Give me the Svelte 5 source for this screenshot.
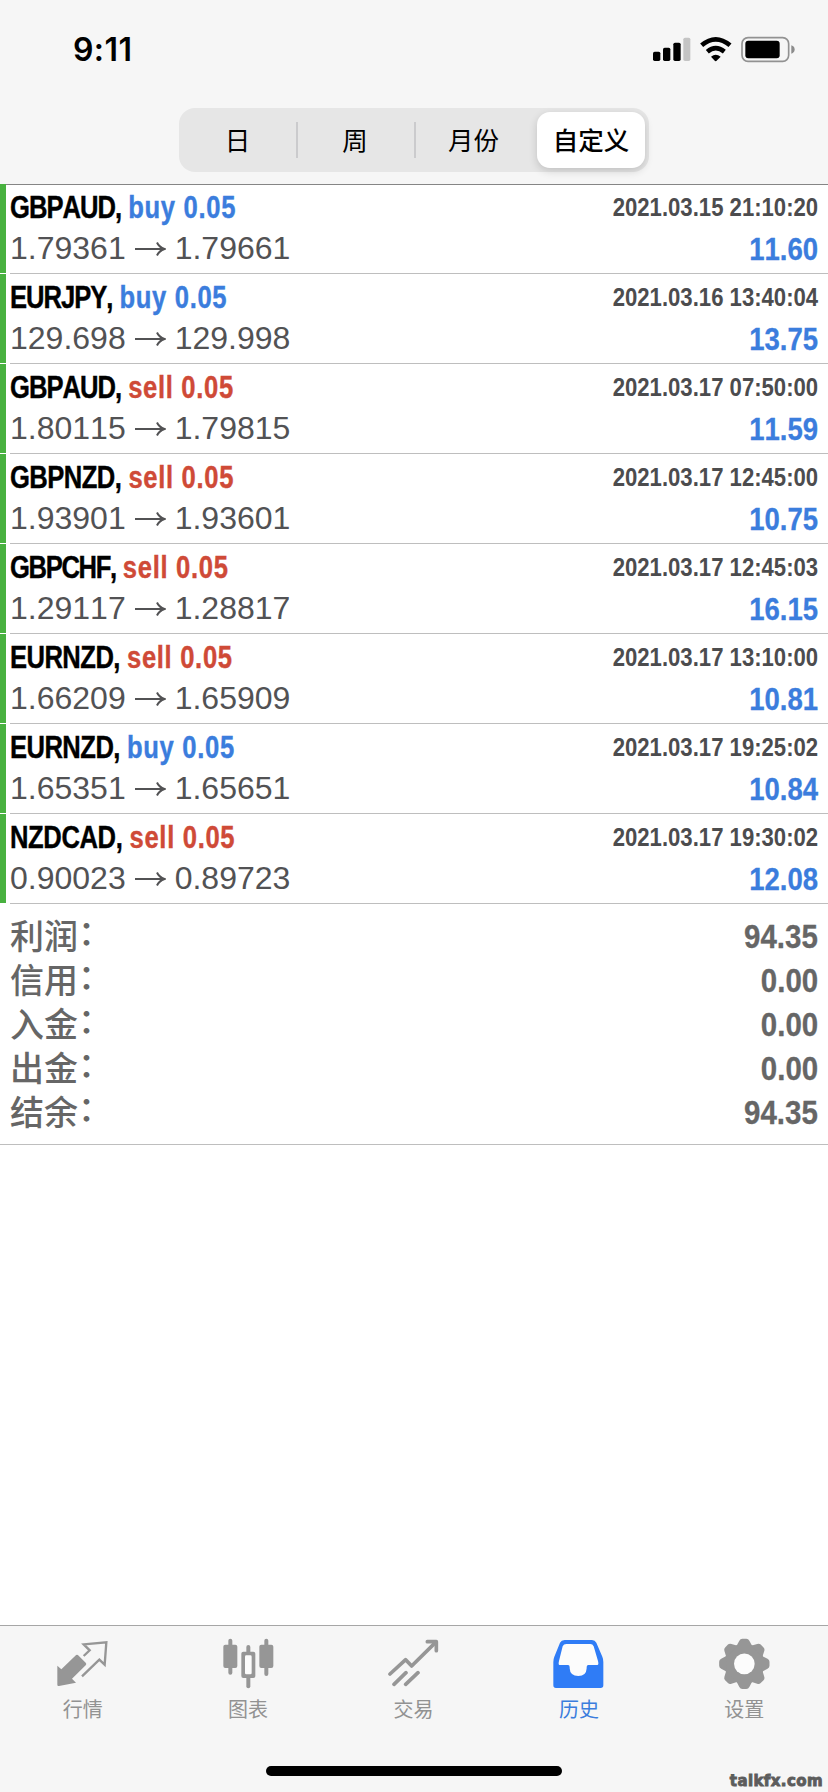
<script>
    const periods = ['日', '周', '月份', '自定义'];
    let period = '自定义';

    const deals = [
        { symbol: 'GBPAUD', side: 'buy', volume: '0.05', open: '1.79361', close: '1.79661', time: '2021.03.15 21:10:20', profit: '11.60' },
        { symbol: 'EURJPY', side: 'buy', volume: '0.05', open: '129.698', close: '129.998', time: '2021.03.16 13:40:04', profit: '13.75' },
        { symbol: 'GBPAUD', side: 'sell', volume: '0.05', open: '1.80115', close: '1.79815', time: '2021.03.17 07:50:00', profit: '11.59' },
        { symbol: 'GBPNZD', side: 'sell', volume: '0.05', open: '1.93901', close: '1.93601', time: '2021.03.17 12:45:00', profit: '10.75' },
        { symbol: 'GBPCHF', side: 'sell', volume: '0.05', open: '1.29117', close: '1.28817', time: '2021.03.17 12:45:03', profit: '16.15' },
        { symbol: 'EURNZD', side: 'sell', volume: '0.05', open: '1.66209', close: '1.65909', time: '2021.03.17 13:10:00', profit: '10.81' },
        { symbol: 'EURNZD', side: 'buy', volume: '0.05', open: '1.65351', close: '1.65651', time: '2021.03.17 19:25:02', profit: '10.84' },
        { symbol: 'NZDCAD', side: 'sell', volume: '0.05', open: '0.90023', close: '0.89723', time: '2021.03.17 19:30:02', profit: '12.08' }
    ];

    // letter spacing of each pair in the condensed title
    const tracking = {
        GBPAUD: -1.25,
        EURJPY: -1.3,
        GBPNZD: -0.7,
        GBPCHF: -1.7,
        EURNZD: -0.7,
        NZDCAD: -0.5
    };

    const summary = [
        { label: '利润', value: '94.35' },
        { label: '信用', value: '0.00' },
        { label: '入金', value: '0.00' },
        { label: '出金', value: '0.00' },
        { label: '结余', value: '94.35' }
    ];

    const tabs = [
        { id: 'quotes', label: '行情' },
        { id: 'charts', label: '图表' },
        { id: 'trade', label: '交易' },
        { id: 'history', label: '历史' },
        { id: 'settings', label: '设置' }
    ];
    let activeTab = 'history';

    const teeth = [0, 45, 90, 135, 180, 225, 270, 315];
</script>

<div class="screen">
    <header>
        <div class="status">
            <span class="clock">9:11</span>
            <svg class="indicators" viewBox="716 108 426 81">
                <rect x="716" y="155" width="22" height="28" rx="5" />
                <rect x="746" y="143" width="22" height="40" rx="5" />
                <rect x="777" y="128" width="22" height="55" rx="5" />
                <rect x="807" y="113" width="21" height="70" rx="5" fill="#c4c4c4" />
                <g fill="none" stroke="#000" stroke-width="14">
                    <path d="M862 136Q904 100 947 136" />
                    <path d="M879 155Q904 134 930 155" />
                </g>
                <path d="M890 170Q904 158 919 170L906 183Q904 184 902 183Z" />
                <rect x="983" y="113" width="140" height="71" rx="18" fill="none" stroke="#929292" stroke-width="5" />
                <rect x="993" y="122" width="103" height="53" rx="9" />
                <path d="M1131 136Q1141 139 1141 148.500Q1141 158 1131 161Z" fill="#8c8c8c" />
            </svg>
        </div>
        <div class="segments">
            {#each periods as name, i}
                <button class="segment" class:divided={i > 0 && i < 3} class:selected={period === name} on:click={() => (period = name)}>{name}</button>
            {/each}
        </div>
    </header>

    <main>
        {#each deals as deal}
            <div class="deal">
                <div class="bar"></div>
                <div class="deal-body">
                    <div class="line">
                        <span class="title"><span style="letter-spacing: {tracking[deal.symbol]}px">{deal.symbol},</span> <span class={deal.side}>{deal.side} {deal.volume}</span></span>
                        <span class="time">{deal.time}</span>
                    </div>
                    <div class="line">
                        <span class="prices">
                            {deal.open}
                            <svg class="arrow" viewBox="0 0 31 16"><path d="M0 8H29M22 1.500Q24 6 29.500 8Q24 10 22 14.500" /></svg>
                            {deal.close}
                        </span>
                        <span class="profit">{deal.profit}</span>
                    </div>
                </div>
            </div>
        {/each}

        <div class="summary">
            {#each summary as row}
                <div class="summary-row">
                    <span>{row.label}<span class="colon">：</span></span>
                    <span class="amount">{row.value}</span>
                </div>
            {/each}
        </div>
    </main>

    <nav>
        {#each tabs as tab}
            <button class="tab" class:active={activeTab === tab.id} on:click={() => (activeTab = tab.id)}>
                {#if tab.id === 'quotes'}
                    <svg viewBox="170 84 153 153">
                        <path d="M171 167L183 178L225 137Q230 132 235 137L256 158Q260 162 256 166L215 206L227 218L176 228Q171 229 171 224Z" />
                        <path class="outline" stroke-width="7" d="M245 199L297 149L313 164L318 97L250 103L268 121L250 138" />
                    </svg>
                {:else if tab.id === 'charts'}
                    <svg viewBox="668 84 153 153">
                        <rect x="684" y="86" width="12" height="108" rx="6" />
                        <rect x="669" y="104" width="42" height="70" rx="6" />
                        <rect x="792" y="86" width="12" height="112" rx="6" />
                        <rect x="777" y="104" width="42" height="70" rx="6" />
                        <rect x="738" y="105" width="12" height="130" rx="6" />
                        <rect x="723" y="125" width="42" height="79" rx="6" />
                        <rect class="hole" x="734" y="136" width="20" height="57" rx="4" />
                    </svg>
                {:else if tab.id === 'trade'}
                    <svg viewBox="263 84 153 153">
                        <path class="outline round" stroke-width="11" d="M269 192L316 149L334 168L405 98M281 223L317 188M316 223L353 188" />
                        <path class="outline round" stroke-width="11" d="M381 95H408V122" />
                    </svg>
                {:else if tab.id === 'history'}
                    <svg viewBox="38 84 153 153">
                        <path d="M73 90H155Q164 90 168 98L186 140Q189 147 189 156V226Q189 234 181 234H47Q39 234 39 226V156Q39 147 42 140L59 98Q63 90 73 90Z" />
                        <path class="hole" d="M78 102H150Q157 102 160 109L173 153Q176 165 171 165H144Q139 165 139 171V175Q138 198 114 198Q89 198 88 175V171Q88 165 83 165H58Q53 165 56 153L67 109Q70 102 78 102Z" />
                    </svg>
                {:else}
                    <svg viewBox="536 84 153 153">
                        <circle cx="612" cy="161.500" r="60" />
                        {#each teeth as angle}
                            <path d="M588 109L597 92Q600 86 606 86H618Q624 86 627 92L636 109Z" transform="rotate({angle} 612 161.500)" />
                        {/each}
                        <circle class="hole" cx="612" cy="161.500" r="31" />
                    </svg>
                {/if}
                <span>{tab.label}</span>
            </button>
        {/each}
    </nav>
    <footer><div class="home"></div></footer>
    <div class="watermark">talkfx.com</div>
</div>

<style>
    :global(body) {
        margin: 0;
    }

    .screen {
        position: relative;
        display: flex;
        flex-direction: column;
        width: 828px;
        height: 1792px;
        overflow: hidden;
        background: #fff;
        font-family: "Liberation Sans", "Noto Sans CJK SC", sans-serif;
        font-kerning: none;
    }

    button {
        margin: 0;
        padding: 0;
        border: 0;
        background: none;
        font-family: "Noto Sans CJK SC", sans-serif;
    }

    header {
        box-sizing: border-box;
        height: 185px;
        flex: none;
        background: #f6f6f6;
        border-bottom: 1px solid #858585;
    }

    .status {
        display: flex;
        justify-content: space-between;
        align-items: flex-start;
        box-sizing: border-box;
        height: 108px;
        padding: 36px 33px 0 73px;
    }

    .clock {
        font: 600 32px/28px "Inter", sans-serif;
        letter-spacing: 0.4px;
    }

    .indicators {
        width: 142px;
        height: 27px;
    }

    .segments {
        display: grid;
        grid-template-columns: 117px 118px 119px 108px;
        box-sizing: border-box;
        width: 470px;
        height: 64px;
        margin-left: 179px;
        padding: 4px;
        border-radius: 16px;
        background: #e6e6e6;
    }

    .segment {
        position: relative;
        padding: 0 8px 2px 0;
        font-size: 25.5px;
        line-height: 54px;
        color: #000;
    }

    .segment.divided::before {
        content: "";
        position: absolute;
        left: -4px;
        top: 10px;
        width: 2px;
        height: 36px;
        background: #cbcbcd;
    }

    .segment.selected {
        padding-right: 0;
        border-radius: 13px;
        background: #fff;
        box-shadow: 0 3px 8px rgba(0, 0, 0, 0.16);
        font-weight: 500;
    }

    main {
        flex: 1;
    }

    .deal {
        display: flex;
        height: 90px;
    }

    .deal:first-child {
        margin-top: -1px;
    }

    .bar {
        width: 6px;
        height: 89px;
        margin-right: 4px;
        background: #48b13f;
    }

    .deal-body {
        box-sizing: border-box;
        flex: 1;
        height: 90px;
        padding: 3px 10px 0 0;
        border-bottom: 1px solid #bebebe;
    }

    .line {
        display: flex;
        justify-content: space-between;
        height: 41px;
        line-height: 41px;
        white-space: nowrap;
    }

    /* condensed bold faces */
    .title,
    .time,
    .profit,
    .amount {
        font-weight: bold;
        transform-origin: right center;
    }

    .title {
        font-size: 32px;
        -webkit-text-stroke-width: 0.4px;
        transform: scaleX(0.8);
        transform-origin: left center;
    }

    .buy,
    .sell {
        letter-spacing: 0.85px;
    }

    .buy {
        color: #3b7ddd;
    }

    .sell {
        color: #cf4a37;
    }

    .time {
        font-size: 25px;
        color: #4c4c4e;
        transform: scaleX(0.885);
    }

    .prices {
        display: flex;
        align-items: center;
        font-size: 32px;
        color: #525254;
    }

    .arrow {
        width: 31px;
        height: 16px;
        margin: 0 9px;
        fill: none;
        stroke: #525254;
        stroke-width: 2;
    }

    .profit {
        font-size: 32px;
        line-height: 43px;
        color: #3b7ddd;
        -webkit-text-stroke-width: 0.3px;
        transform: scaleX(0.86);
    }

    .summary {
        height: 225px;
        padding: 15px 10px 0;
        border-bottom: 1px solid #bebebe;
    }

    .summary-row {
        display: flex;
        justify-content: space-between;
        height: 44px;
        font-weight: 500;
        font-size: 34px;
        line-height: 37px;
        color: #666;
    }

    .colon {
        line-height: 0;
        vertical-align: 4px;
    }

    .amount {
        font: bold 33.5px/36px "Liberation Sans", sans-serif;
        -webkit-text-stroke-width: 0.3px;
        transform: scaleX(0.88);
    }

    nav {
        display: grid;
        grid-template-columns: repeat(5, 1fr);
        box-sizing: border-box;
        height: 107px;
        padding: 12px 1px 0 0;
        background: #f6f6f6;
        border-top: 1px solid #a6a6a6;
    }

    .tab {
        display: flex;
        flex-direction: column;
        align-items: center;
        gap: 6px;
        font-size: 20px;
        line-height: 28px;
        color: #929292;
    }

    .tab svg {
        width: 51px;
        height: 51px;
        fill: #969696;
    }

    .tab.active {
        color: #3b7ddd;
    }

    .tab.active svg {
        fill: #2f7cf6;
    }

    .tab .hole {
        fill: #fcfcfc;
    }

    .tab .outline {
        fill: none;
        stroke: #969696;
    }

    .round {
        stroke-linecap: round;
        stroke-linejoin: round;
    }

    footer {
        display: flex;
        justify-content: center;
        box-sizing: border-box;
        height: 60px;
        padding-top: 34px;
        background: #f6f6f6;
    }

    .home {
        width: 296px;
        height: 10px;
        border-radius: 5px;
        background: #000;
    }

    .watermark {
        position: absolute;
        right: 5px;
        bottom: 2px;
        font: bold 15px/18px "DejaVu Sans", sans-serif;
        letter-spacing: 0.4px;
        color: #5c5c5c;
        -webkit-text-stroke: 0.9px #5c5c5c;
    }
</style>
